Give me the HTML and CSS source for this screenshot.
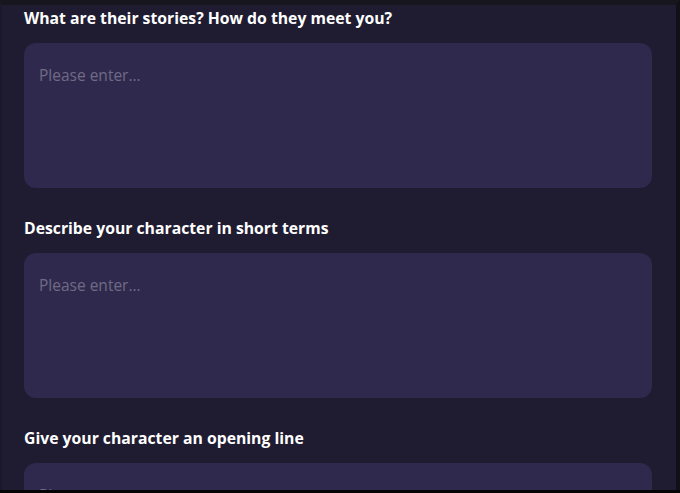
FILE: index.html
```html
<!DOCTYPE html>
<html>
<head>
<meta charset="utf-8">
<link rel="stylesheet" href="styles.css">
</head>
<body>
<div class="frame">
  <div class="form">
    <div class="field">
      <div class="label">What are their stories? How do they meet you?</div>
      <div class="area">Please enter...</div>
    </div>
    <div class="field">
      <div class="label">Describe your character in short terms</div>
      <div class="area">Please enter...</div>
    </div>
    <div class="field">
      <div class="label">Give your character an opening line</div>
      <div class="area">Please enter...</div>
    </div>
  </div>
</div>
</body>
</html>
```
FILE: styles.css
```css
html, body {
  margin: 0;
  padding: 0;
  width: 680px;
  height: 493px;
  overflow: hidden;
  background: #050507;
}
.frame {
  box-sizing: border-box;
  width: 680px;
  height: 490px;
  overflow: hidden;
  background: #1f1c31;
  border-top: 5px solid #17161f;
  border-left: 2px solid #1c1829;
  border-right: 4px solid #101016;
}
.form {
  display: flex;
  flex-direction: column;
  gap: 30px;
  padding: 3px 24px 0 22px;
  font-family: "Open Sans", "Noto Sans", sans-serif;
}
.field {
  display: flex;
  flex-direction: column;
}
.label {
  color: #ffffff;
  font-weight: 700;
  font-size: 15.75px;
  line-height: 20px;
  margin-bottom: 15px;
}
.area {
  box-sizing: border-box;
  height: 145px;
  border-radius: 12px;
  background: #2f2a4d;
  color: #6f6b86;
  font-size: 15.5px;
  line-height: 20px;
  padding: 22px 15px;
}
```
